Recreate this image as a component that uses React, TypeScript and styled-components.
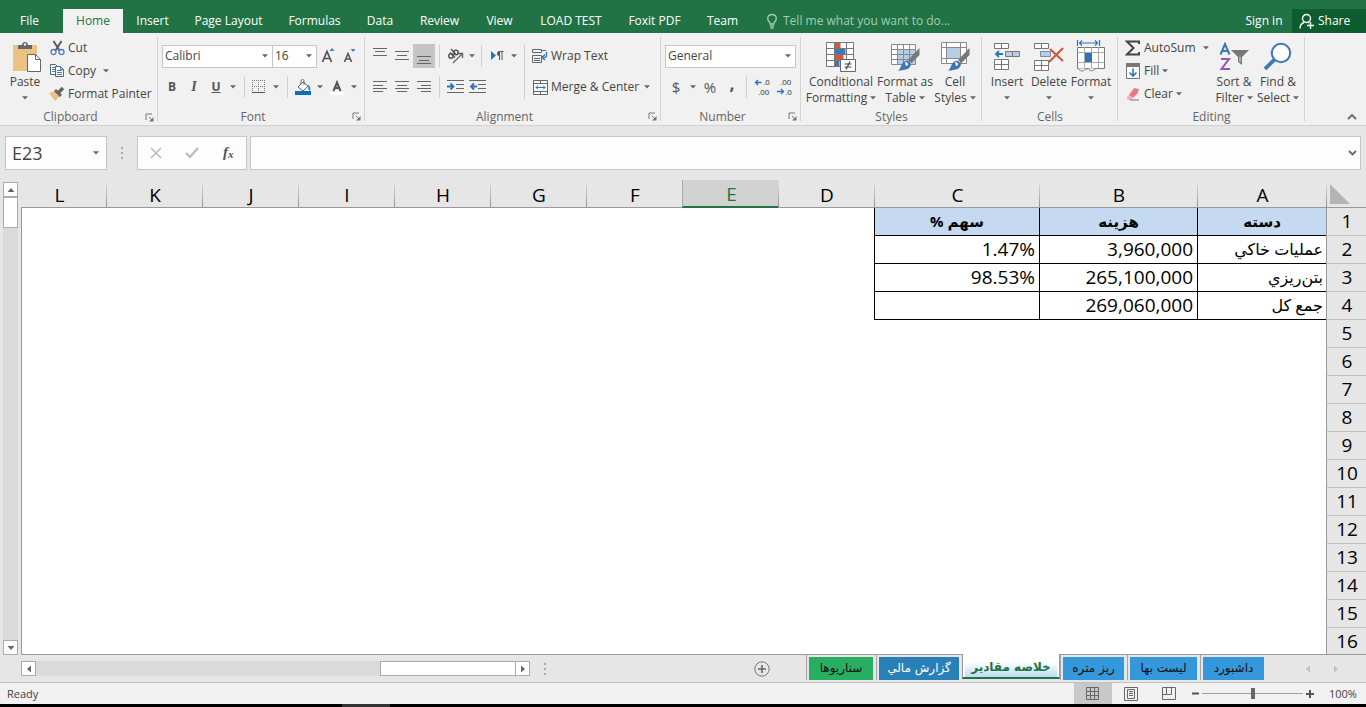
import React from "react";
import styled, { createGlobalStyle, css } from "styled-components";

const GlobalStyle = createGlobalStyle`
  *, *::before, *::after { box-sizing: border-box; }
  html, body { margin: 0; padding: 0; }
  body { background: #e6e6e6; }
  button, input, select { font: inherit; color: inherit; margin: 0; padding: 0; border: 0; background: none; border-radius: 0; outline: 0; }
  svg { display: block; flex: none; }
`;

const App_ = styled.div`
  display: flex;
  flex-direction: column;
  height: 100vh;
  min-height: 360px;
  overflow: hidden;
  font-family: "Open Sans", "DejaVu Sans", sans-serif;
  font-size: 12px;
  line-height: 16px;
  color: #444;
  background: #e6e6e6;
`;

/* ---------- Tab strip ---------- */
const TitleBar = styled.header`
  display: flex;
  align-items: flex-end;
  flex: none;
  height: 33px;
  background: #217346;
  color: #fff;
  white-space: nowrap;
`;
const TabNav = styled.nav`
  display: flex;
`;
const RibbonTab = styled.button<{ $w: number; $active?: boolean }>`
  width: ${(p) => p.$w}px;
  height: 24px;
  text-align: center;
  ${(p) => p.$active && css`background: #f1f1f1; color: #217346;`}
`;
const FileTab = styled(RibbonTab)`
  margin-right: 4px;
`;
const TellMe = styled.label`
  display: flex;
  flex: 1;
  align-items: center;
  height: 24px;
  gap: 5px;
  padding-left: 14px;
  color: #a0cdb0;
`;
const TellMeInput = styled.input`
  width: 200px;
  &::placeholder { color: #a0cdb0; opacity: 1; }
`;
const SignIn = styled.button`
  height: 24px;
  width: 56px;
`;
const Share = styled.button`
  display: flex;
  align-items: center;
  gap: 4px;
  width: 74px;
  height: 24px;
  padding-left: 7px;
  background: #0e5c2f;
`;

/* ---------- Ribbon ---------- */
const Ribbon = styled.div`
  display: flex;
  flex: none;
  height: 93px;
  background: #f1f1f1;
  border-bottom: 1px solid #d2d2d2;
  white-space: nowrap;
`;
const Group = styled.section<{ $w: number }>`
  display: flex;
  flex-direction: column;
  flex: none;
  width: ${(p) => p.$w}px;
  background: linear-gradient(#d4d4d4, #d4d4d4) right 0 top 4px / 1px 84px no-repeat;
`;
const GroupBody = styled.div<{ $left?: number }>`
  display: flex;
  height: 76px;
  padding-left: ${(p) => p.$left ?? 4}px;
`;
const Caption = styled.div<{ $launcher?: boolean }>`
  display: grid;
  grid-template-columns: ${(p) => (p.$launcher ? "1fr 17px" : "1fr")};
  align-items: center;
  height: 17px;
  color: #666;
  text-align: center;
`;
const Launcher = styled.button`
  width: 9px;
  height: 9px;
  margin-left: 4px;
`;
const Rows = styled.div<{ $left?: number }>`
  display: flex;
  flex-direction: column;
  gap: 7px;
  padding: 11px 0 0 ${(p) => p.$left ?? 0}px;
`;
const Row = styled.div`
  display: flex;
  align-items: center;
  height: 24px;
`;
const ToolButton = styled.button<{ $w?: number; $on?: boolean }>`
  display: flex;
  flex: none;
  align-items: center;
  justify-content: center;
  width: ${(p) => p.$w ?? 22}px;
  height: 24px;
  font-size: 15px;
  color: #555;
  background: ${(p) => (p.$on ? "#c5c5c5" : "transparent")};
`;
const BoldButton = styled(ToolButton)`
  font-weight: 700;
  font-size: 12px;
`;
const ItalicButton = styled(BoldButton)`
  font-family: "Liberation Serif", serif;
  font-style: italic;
  font-size: 14px;
`;
const UnderlineButton = styled(BoldButton)`
  text-decoration: underline;
`;
const CommaButton = styled(BoldButton)`
  font-size: 18px;
  padding-bottom: 8px;
`;
const Divider = styled.span<{ $tall?: boolean }>`
  flex: none;
  width: 9px;
  height: ${(p) => (p.$tall ? 55 : 22)}px;
  margin-top: ${(p) => (p.$tall ? 11 : 0)}px;
  background: linear-gradient(#d0d0d0, #d0d0d0) center / 1px 100% no-repeat;
`;
const Stack = styled.div<{ $w?: number; $left?: number }>`
  display: flex;
  flex-direction: column;
  padding: 3px 0 0 ${(p) => p.$left ?? 0}px;
  width: ${(p) => (p.$w ? p.$w + "px" : "auto")};
`;
const LabelButton = styled.button<{ $h?: number }>`
  display: flex;
  align-items: center;
  gap: 3px;
  height: ${(p) => p.$h ?? 23}px;
  text-align: left;
`;
const IconSlot = styled.span`
  display: flex;
  justify-content: center;
  width: 16px;
`;
const CaretGap = styled.span<{ $w: number }>`
  display: flex;
  justify-content: flex-end;
  width: ${(p) => p.$w}px;
`;
const Big = styled.button<{ $w: number }>`
  display: flex;
  flex-direction: column;
  align-items: center;
  flex: none;
  width: ${(p) => p.$w}px;
  height: 76px;
  padding-top: 6px;
`;
const BigIcon = styled.span`
  display: flex;
  align-items: center;
  justify-content: center;
  height: 35px;
`;
const BigLine = styled.span`
  display: flex;
  align-items: center;
  justify-content: center;
  gap: 3px;
  height: 16px;
`;
const Field = styled.label<{ $w: number; $joined?: boolean }>`
  display: grid;
  grid-template-columns: 1fr 10px;
  align-items: center;
  width: ${(p) => p.$w}px;
  height: 23px;
  background: #fff;
  border: 1px solid #c6c6c6;
  ${(p) => p.$joined && css`border-right: 0;`}
`;
const Select = styled.select`
  grid-area: 1 / 1 / 2 / 3;
  width: 100%;
  height: 21px;
  padding-left: 2px;
  appearance: none;
`;
const FieldCaret = styled.span`
  grid-area: 1 / 2;
  pointer-events: none;
`;
const RibbonEnd = styled.div`
  display: flex;
  flex: 1;
  align-items: flex-end;
  justify-content: flex-end;
  padding: 0 9px 3px 0;
`;

/* ---------- Formula bar ---------- */
const FormulaBar = styled.div`
  display: flex;
  flex: none;
  height: 54px;
  padding: 10px 5px;
`;
const box = css`
  display: flex;
  align-items: center;
  background: #fdfdfd;
  border: 1px solid #c6c6c6;
`;
const NameBox = styled.label`
  ${box}
  width: 102px;
  padding: 0 6px;
`;
const NameInput = styled.input`
  flex: 1;
  min-width: 0;
  font-size: 18px;
`;
const Grip = styled.span`
  display: flex;
  align-items: center;
  justify-content: center;
  width: 30px;
`;
const FormulaTools = styled.div`
  ${box}
  width: 110px;
  margin-right: 3px;
`;
const FormulaButton = styled.button`
  display: flex;
  flex: 1;
  align-items: center;
  justify-content: center;
`;
const FormulaField = styled.label`
  ${box}
  flex: 1;
  padding-right: 3px;
`;
const FormulaInput = styled.input`
  flex: 1;
  height: 30px;
  padding-left: 6px;
  font-size: 18px;
`;

/* ---------- Sheet ---------- */
const SheetArea = styled.main`
  display: flex;
  flex: 1;
  min-height: 0;
`;
const VScroll = styled.div`
  display: flex;
  flex-direction: column;
  flex: none;
  width: 15px;
  margin: 2px 3px 0;
  background: #dadada;
`;
const scrollPart = css`
  display: flex;
  align-items: center;
  justify-content: center;
  flex: none;
  width: 15px;
  height: 15px;
  background: #fff;
  border: 1px solid #ababab;
`;
const ScrollButton = styled.button`
  ${scrollPart}
`;
const VThumb = styled.div`
  height: 31px;
  background: #fff;
  border: 1px solid #ababab;
`;
const Spacer = styled.div`
  flex: 1;
`;
const GridWrap = styled.div`
  flex: 1;
  min-width: 0;
  overflow: hidden;
  border-bottom: 1px solid #999;
`;
const Grid = styled.table`
  width: 100%;
  table-layout: fixed;
  border-collapse: separate;
  border-spacing: 0;
  font-size: 19px;
  color: #000;
`;
const Col = styled.col<{ $w?: number }>`
  width: ${(p) => (p.$w ? p.$w + "px" : "auto")};
`;
const ColHead = styled.th<{ $on?: boolean; $last?: boolean }>`
  height: 28px;
  padding: ${(p) => (p.$last ? "2px 8px 0 0" : "2px 0 0 2px")};
  font-weight: 400;
  line-height: 24px;
  text-align: center;
  border-bottom: 1px solid #999;
  background: ${(p) =>
    p.$last ? "none" : "linear-gradient(#e6e6e6, #8f8f8f) left top / 1px 100% no-repeat"};
  ${(p) =>
    p.$on &&
    css`
      color: #217346;
      background: #d2d2d2;
      border-left: 1px solid #a8a8a8;
      border-bottom: 2px solid #217346;
    `}
`;
const Corner = styled.th`
  padding: 0;
  border-bottom: 1px solid #999;
  background: linear-gradient(#e6e6e6, #8f8f8f) left top / 1px 100% no-repeat;
`;
const CornerButton = styled.button`
  display: flex;
  width: 100%;
  padding: 0 16px 0 4px;
`;
const RowHead = styled.th`
  height: 28px;
  padding: 0 0 1px 1px;
  font-weight: 400;
  line-height: 24px;
  text-align: center;
  background: #e6e6e6;
  border-left: 1px solid #999;
  border-bottom: 1px solid #c0c0c0;
`;
const Cell = styled.td<{ $filled?: boolean; $edge?: boolean }>`
  height: 28px;
  padding: 0 3px 1px;
  line-height: 24px;
  background: #fff;
  text-align: right;
  white-space: nowrap;
  ${(p) => p.$edge && css`border-left: 1px solid #999;`}
  ${(p) =>
    p.$filled &&
    css`
      border-left: 1px solid #000;
      border-bottom: 1px solid #000;
    `}
`;
const LabelCell = styled(Cell)`
  font-size: 16px;
`;
const TitleCell = styled(Cell)`
  background: #c5d9f1;
  font-weight: 700;
  font-size: 15px;
  text-align: center;
`;

/* ---------- Sheet tabs ---------- */
const BottomBar = styled.div`
  display: flex;
  flex: none;
  height: 28px;
  padding-left: 21px;
  border-bottom: 1px solid #c0c0c0;
`;
const HScroll = styled.div`
  display: flex;
  width: 509px;
  height: 15px;
  margin-top: 6px;
  background: #dadada;
`;
const HThumb = styled.div`
  width: 136px;
  margin-right: -1px;
  background: #fff;
  border: 1px solid #ababab;
`;
const AddSheet = styled.button`
  display: flex;
  align-items: center;
  justify-content: center;
  width: 26px;
  margin: 0 31px 0 auto;
`;
const SheetTabs = styled.div`
  display: flex;
  margin-right: 34px;
  font-family: "DejaVu Sans", sans-serif;
`;
const SheetTab = styled.button<{ $w: number; $bg: string; $fg: string }>`
  width: ${(p) => p.$w}px;
  height: 25px;
  padding: 2px 3px 0 2px;
  border-left: 1px solid #a6a6a6;
  background: ${(p) => p.$bg} content-box;
  color: ${(p) => p.$fg};
  line-height: 23px;
`;
const ActiveTab = styled.button<{ $w: number }>`
  width: ${(p) => p.$w}px;
  height: 25px;
  margin-top: -1px;
  position: relative;
  font-weight: 700;
  color: #217346;
  background: linear-gradient(#fff 20%, #bddcf2) content-box, #fff;
  padding: 4px 2px 0;
  line-height: 19px;
  border: solid #999;
  border-width: 0 1px;
  border-bottom: 2px solid #217346;
`;
const TabArrows = styled.div`
  display: flex;
  align-items: center;
  gap: 20px;
  padding: 0 26px 0 3px;
`;

/* ---------- Status bar ---------- */
const StatusBar = styled.footer`
  display: flex;
  align-items: center;
  flex: none;
  height: 21px;
  padding-left: 7px;
  background: #f1f1f1;
  font-size: 11px;
`;
const ViewButton = styled.button<{ $on?: boolean }>`
  display: flex;
  align-items: center;
  justify-content: center;
  width: 38px;
  height: 21px;
  background: ${(p) => (p.$on ? "#c8c8c8" : "transparent")};
`;
const ZoomButton = styled.button`
  display: flex;
  align-items: center;
  justify-content: center;
  width: 14px;
  height: 20px;
`;
const Zoom = styled.input`
  width: 101px;
  height: 20px;
  appearance: none;
  &::-webkit-slider-runnable-track {
    height: 11px;
    background: linear-gradient(#a0a0a0, #a0a0a0) center / 100% 1px no-repeat;
  }
  &::-webkit-slider-thumb {
    appearance: none;
    width: 4px;
    height: 11px;
    background: #666;
  }
`;
const ZoomValue = styled.span`
  width: 49px;
  padding-left: 12px;
`;
const DesktopEdge = styled.div`
  flex: none;
  height: 3px;
  background: linear-gradient(#333, #333) 342px 0 / 48px 3px no-repeat #000;
`;

/* ---------- Icons ---------- */
const Caret = ({ s = 6, c = "#666" }: { s?: number; c?: string }) => (
  <svg width={s} height="4" viewBox="0 0 6 4"><path d="M0 0.300h6L3 3.600z" fill={c} /></svg>
);
const Svg = ({ w, h, children }: { w: number; h: number; children: React.ReactNode }) => (
  <svg width={w} height={h} viewBox={`0 0 ${w} ${h}`} fill="none">{children}</svg>
);
const LauncherIcon = () => (
  <Svg w={9} h={9}><path d="M1 7V1h6M4 4l3 3" stroke="#777" /><path d="M8.500 4v4.500H4z" fill="#777" /></Svg>
);
const PasteIcon = () => (
  <Svg w={34} h={32}>
    <g transform="translate(4 0)">
      <path d="M1 4h24v26H1z" fill="#eac282" />
      <path d="M6 8V4h4c0-4 6-4 6 0h4v4z" fill="#666" /><circle cx="13" cy="3.500" r="1.200" fill="#f1f1f1" />
      <path d="M15.500 13.500h8l5 5v12h-13z" fill="#fff" stroke="#666" /><path d="M23.500 13.500v5h5" stroke="#666" />
    </g>
  </Svg>
);
const CutIcon = () => (
  <Svg w={15} h={16}>
    <path d="M3.500 1l6 9.500M11.500 1l-6 9.500" stroke="#5a5a5a" strokeWidth="2" />
    <circle cx="3.500" cy="12" r="2.500" stroke="#4a7ebb" strokeWidth="1.300" /><circle cx="11.500" cy="12" r="2.500" stroke="#4a7ebb" strokeWidth="1.300" />
  </Svg>
);
const CopyIcon = () => (
  <Svg w={16} h={15}>
    <path d="M1.500 1.500h5l2 2v8h-7z" fill="#fff" stroke="#55677c" />
    <path d="M3 4.500h3M3 6.500h3M3 8.500h3" stroke="#4a7ebb" />
    <path d="M6.500 3.500h5l3 3v7h-8z" fill="#fff" stroke="#55677c" /><path d="M11.500 3.500v3h3M8 7.500h5M8 9.500h5M8 11.500h5" stroke="#4a7ebb" />
  </Svg>
);
const BrushIcon = () => (
  <Svg w={16} h={16}>
    <path d="M0 7l6-2 5 5-5 5z" fill="#eac282" /><path d="M6 4l6 6" stroke="#666" strokeWidth="3" />
    <path d="M9 7l5-5" stroke="#666" strokeWidth="3.500" />
  </Svg>
);
const GrowIcon = ({ small }: { small?: boolean }) => (
  <Svg w={14} h={18}>
    {small ? (
      <><path d="M1.500 15L5 6.500 8.500 15M3 12h4" stroke="#555" strokeWidth="1.600" /><path d="M7.500 2h5L10 5z" fill="#4a7ebb" /></>
    ) : (
      <><path d="M1.500 15L6 4.500 10.500 15M3 11.500h6" stroke="#555" strokeWidth="1.700" /><path d="M8.500 4h5L11 1z" fill="#4a7ebb" /></>
    )}
  </Svg>
);
const BordersIcon = () => (
  <Svg w={14} h={14}>
    <path d="M0 .5h14M0 6.500h14M.5 0v14M6.500 0v14M12.500 0v14" stroke="#777" strokeDasharray="1 1" /><path d="M0 12.500h13" stroke="#555" />
  </Svg>
);
const FillColorIcon = () => (
  <Svg w={17} h={17}>
    <path d="M3 8l5-5 5 4-5 5z" fill="#fff" stroke="#666" /><path d="M6 5V2c0-2 3-2 3 0v4" stroke="#666" />
    <path d="M13 6c2 1 3 3 2 6-2-1-2-3-2-6z" fill="#4a7ebb" /><path d="M0 12h16v4H0z" fill="#0070c0" />
  </Svg>
);
const FontColorIcon = () => (
  <Svg w={14} h={17}>
    <path d="M3.500 12L7 3.500 10.500 12M4.500 9h5" stroke="#555" strokeWidth="2" /><path d="M0 13h14v3H0z" fill="#fff" />
  </Svg>
);
const Lines = ({ rows }: { rows: [number, number, number][] }) => (
  <Svg w={15} h={18}>
    {rows.map(([y, a, b]) => <path key={y} d={`M${a} ${y}.5H${b}`} stroke="#666" />)}
  </Svg>
);
const IndentIcon = ({ out }: { out?: boolean }) => (
  <Svg w={17} h={14}>
    <path d="M0 .5h17M9 4.500h8M9 8.500h8M0 12.500h17" stroke="#666" />
    <path d={out ? "M8 6.500H2M5 3.500l-3 3 3 3" : "M0 6.500h6M3.500 3.500l3 3-3 3"} stroke="#2f75b5" strokeWidth="1.800" />
  </Svg>
);
const OrientIcon = () => (
  <Svg w={17} h={16}>
    <circle cx="4" cy="8" r="2.200" stroke="#555" strokeWidth="1.500" /><path d="M3 4.500l5 5" stroke="#555" strokeWidth="1.500" />
    <circle cx="9" cy="4.500" r="2.200" stroke="#555" strokeWidth="1.500" /><path d="M4 1l4.500 5" stroke="#555" strokeWidth="1.500" />
    <path d="M6 15l9-9M11 5.500h4.500V10" stroke="#666" strokeWidth="1.400" />
  </Svg>
);
const DirectionIcon = () => (
  <Svg w={14} h={12}>
    <path d="M1 1l5 4.500L1 10z" fill="#2f75b5" /><path d="M13.500 1.500h-4M9.500 1v9M12 1v9" stroke="#555" /><path d="M9.500 1a2.500 2.500 0 100 5z" fill="#555" />
  </Svg>
);
const WrapIcon = () => (
  <Svg w={16} h={16}>
    <path d="M.5 1.500h9v3h-9zM9.500 2.500H14M.5 7.500h9v7h-9zM2 10.500h6M2 12.500h6" stroke="#666" />
    <path d="M14.500 4v4c0 1-1 1.500-3 1.500M13 6.500l-3 3 3 2.500" stroke="#2f75b5" strokeWidth="1.300" />
  </Svg>
);
const MergeIcon = () => (
  <Svg w={15} h={15}>
    <path d="M.5.5h14v14H.5zM.5 3.500h14M.5 11.500h14M7.500.5v3M7.500 11.500v3" stroke="#666" fill="#fff" />
    <path d="M3 7.500h9M5 5.500l-2 2 2 2M10 5.500l2 2-2 2" stroke="#2f75b5" />
  </Svg>
);
const DecimalIcon = ({ less }: { less?: boolean }) => (
  <svg width="16" height="18" viewBox="0 0 16 18" fontSize="8" fill="#333" fontFamily="Liberation Sans">
    <text x={less ? 4 : 9} y="7">{less ? ".00" : ".0"}</text>
    <text x={less ? 9 : 4} y="17">{less ? ".0" : ".00"}</text>
    {less
      ? <path d="M1 13.500h6M5 11l2.500 2.500L5 16" fill="none" stroke="#2f75b5" strokeWidth="1.400" />
      : <path d="M7.500 4.500h-6M4 2L1.500 4.500 4 7" fill="none" stroke="#2f75b5" strokeWidth="1.400" />}
  </svg>
);
const ConditionalIcon = () => (
  <Svg w={32} h={32}>
    <path d="M1.500 1.500h27v24h-27z" fill="#fff" />
    <path d="M9.500 1h6v6h-6zM9.500 13h9v6h-9z" fill="#d0583f" /><path d="M9.500 7h11v6h-11zM9.500 19h5v6h-5z" fill="#3f76b5" />
    <path d="M1.500 1.500h27v24h-27zM1.500 7.500h27M1.500 13.500h27M1.500 19.500h27M9.500 1v24M21.500 1v24" stroke="#777" />
    <path d="M15.500 18.500h15v12h-15z" fill="#fff" stroke="#666" />
    <path d="M19.500 23h7M19.500 26h7M25 20.500l-4 8" stroke="#444" strokeWidth="1.200" />
  </Svg>
);
const Paintbrush = () => (
  <g><path d="M29.500 7v7l-8 8-3.500-3z" fill="#777" /><path d="M17.500 19.500l3.500 3c0 5-5 7-13 7 4-2 2-9 9.500-10z" fill="#3f76b5" /><path d="M15 21c2 0 3 1 3 3l-2 1z" fill="#fff" /></g>
);
const TableFormatIcon = () => (
  <Svg w={30} h={32}>
    <path d="M1.500 3.500h24v20h-24z" fill="#fff" /><path d="M8 9h17v14H8z" fill="#b8cce4" />
    <path d="M1.500 3.500h24v20h-24zM1.500 8.500h24M1.500 13.500h24M1.500 18.500h24M7.500 3v20M13.500 3v20M19.500 3v20" stroke="#888" /><Paintbrush />
  </Svg>
);
const CellStylesIcon = () => (
  <Svg w={30} h={32}>
    <path d="M1.500 1.500h25v21h-25z" fill="#fff" /><path d="M7 7h13v10H7z" fill="#b8cce4" />
    <path d="M1.500 1.500h25v21h-25zM1.500 6.500h25M1.500 17.500h25M6.500 1v21M20.500 1v21" stroke="#888" /><Paintbrush />
  </Svg>
);
const InsertIcon = () => (
  <Svg w={28} h={30}>
    <path d="M1.500 1.500h14v5h-14zM8.500 1.500v5M1.500 17.500h14v10h-14zM8.500 17.500v10M1.500 22.500h14" fill="#fff" stroke="#777" />
    <path d="M12.500 9.500h14v5h-14z" fill="#b8cce4" stroke="#777" /><path d="M19.500 9.500v5" stroke="#777" />
    <path d="M10 12H3M6 9l-3 3 3 3" stroke="#2f75b5" strokeWidth="1.800" />
  </Svg>
);
const DeleteIcon = () => (
  <Svg w={30} h={30}>
    <path d="M.5 1.500h14v5H.5zM7.500 1.500v5M.5 18.500h14v10H.5zM7.500 18.500v10M.5 23.500h14" fill="#fff" stroke="#777" />
    <path d="M6.500 9.500h10v5h-10z" fill="#b8cce4" stroke="#6f8fb8" /><path d="M16 7l13 12M29 6L15 20" stroke="#d0583f" strokeWidth="2.200" />
  </Svg>
);
const FormatIcon = () => (
  <Svg w={30} h={33}>
    <path d="M1.500 0v6M23.500 0v6M3 3h19M6 .5L3.500 3 6 5.500M19 .5L21.500 3 19 5.500" stroke="#2f75b5" strokeWidth="1.200" />
    <path d="M1.500 7.500h27v21h-27z" fill="#fff" stroke="#777" /><path d="M1.500 12.500h27M1.500 22.500h27M8.500 7v22M15.500 7v22M22.500 7v22" stroke="#aaa" />
    <path d="M9 13h7v9H9z" fill="#2f75b5" /><path d="M2 28.500c2 3 6 3 7 1l3-1c3 4 6 2 7 0" fill="#fff" stroke="#777" />
  </Svg>
);
const SigmaIcon = () => (
  <Svg w={16} h={16}><path d="M14 4V1.500H2L8.500 8 2 14.500h12V12" stroke="#444" strokeWidth="2" /></Svg>
);
const FillIcon = () => (
  <Svg w={14} h={16}>
    <path d="M.5.5h13v15H.5z" fill="#fff" stroke="#777" /><path d="M0 0h14v4H0z" fill="#777" />
    <path d="M7 5.500V13M3.500 9.500L7 13l3.500-3.500" stroke="#2f75b5" strokeWidth="1.600" />
  </Svg>
);
const ClearIcon = () => (
  <Svg w={14} h={14}>
    <path d="M8 1l5 1-1 4-5 5-4-3z" fill="#e8798f" /><path d="M3 8l4 3-2 2H2L.5 10.500z" fill="#f3aebb" /><path d="M4 13h9" stroke="#777" />
  </Svg>
);
const SortIcon = () => (
  <Svg w={30} h={30}>
    <path d="M1.500 12.500L6 2l4.500 10.500M3 9h6" stroke="#3f76b5" strokeWidth="2" /><path d="M2 17h8L2.500 27h8.500" stroke="#9455b5" strokeWidth="2" />
    <path d="M12 8h18l-7 7v8l-4-3v-5z" fill="#777" /><path d="M21 14.500v5.500" stroke="#ddd" />
  </Svg>
);
const FindIcon = () => (
  <Svg w={30} h={30}>
    <circle cx="18" cy="11" r="9.200" fill="#fff" stroke="#3f76b5" strokeWidth="2" /><path d="M11 18L2 27" stroke="#3f76b5" strokeWidth="3.800" />
  </Svg>
);
const BulbIcon = () => (
  <Svg w={12} h={16}>
    <path d="M4 11V9.500C.5 7 1 1.500 6 1.500S11.500 7 8 9.500V11zM4 13h4M4.500 15h3" stroke="#a0cdb0" strokeWidth="1.300" />
  </Svg>
);
const PersonIcon = () => (
  <Svg w={15} h={16}>
    <circle cx="7.500" cy="5.500" r="4" stroke="#fff" strokeWidth="1.400" /><path d="M1 15.500c0-3 1.500-5 4-6M9 9l1 1M8 12.500h7M11.500 9v7" stroke="#fff" strokeWidth="1.400" />
  </Svg>
);
const Dots = () => (
  <Svg w={3} h={12}><path d="M0 1h2M0 6h2M0 11h2" stroke="#aaa" strokeWidth="2" /></Svg>
);
const Tri = ({ d, c = "#666" }: { d: string; c?: string }) => (
  <Svg w={8} h={8}><path d={d} fill={c} /></Svg>
);
const LEFT = "M6 .5v7L2 4z";
const RIGHT = "M2 .5v7L6 4z";
const UP = "M.5 6h7L4 2z";
const DOWN = "M.5 2h7L4 6z";

/* ---------- Pieces ---------- */
const Tool = ({ label, w, on, children }: { label: string; w?: number; on?: boolean; children: React.ReactNode }) => (
  <ToolButton aria-label={label} $w={w} $on={on}>{children}</ToolButton>
);
const Drop = ({ label, w }: { label: string; w: number }) => (
  <ToolButton aria-label={label} $w={w}><Caret /></ToolButton>
);
const GroupCaption = ({ text, launcher }: { text: string; launcher?: boolean }) => (
  <Caption $launcher={launcher}>
    <span>{text}</span>
    {launcher && <Launcher aria-label={`${text} settings`}><LauncherIcon /></Launcher>}
  </Caption>
);
const BigButton = ({ w, icon, top, bottom }: { w: number; icon: React.ReactNode; top: string; bottom?: string }) => (
  <Big $w={w}>
    <BigIcon>{icon}</BigIcon>
    <BigLine>{top}</BigLine>
    <BigLine>{bottom}<Caret /></BigLine>
  </Big>
);
const Combo = ({ label, value, w, joined }: { label: string; value: string; w: number; joined?: boolean }) => (
  <Field $w={w} $joined={joined}>
    <Select aria-label={label} defaultValue={value}><option>{value}</option></Select>
    <FieldCaret><Caret /></FieldCaret>
  </Field>
);

const tabs: [string, number][] = [
  ["Home", 60], ["Insert", 59], ["Page Layout", 93], ["Formulas", 79], ["Data", 52],
  ["Review", 67], ["View", 53], ["LOAD TEST", 90], ["Foxit PDF", 77], ["Team", 59],
];
const columns: [string, number | undefined][] = [
  ["A", 129], ["B", 158], ["C", 165], ["D", 96], ["E", 96], ["F", 96],
  ["G", 96], ["H", 96], ["I", 96], ["J", 96], ["K", 96], ["L", undefined],
];
const data = [
  ["دسته", "هزینه", "سهم %"],
  ["عمليات خاكي", "3,960,000", "1.47%"],
  ["بتن‌ريزي", "265,100,000", "98.53%"],
  ["جمع كل", "269,060,000", ""],
];
const ROWS = 16;

export default function App() {
  return (
    <App_>
      <GlobalStyle />
      <TitleBar>
        <TabNav>
          <FileTab $w={59}>File</FileTab>
          {tabs.map(([t, w]) => <RibbonTab key={t} $w={w} $active={t === "Home"}>{t}</RibbonTab>)}
        </TabNav>
        <TellMe>
          <BulbIcon />
          <TellMeInput aria-label="Tell me" placeholder="Tell me what you want to do..." />
        </TellMe>
        <SignIn>Sign in</SignIn>
        <Share><PersonIcon />Share</Share>
      </TitleBar>

      <Ribbon>
        <Group $w={158}>
          <GroupBody $left={5}>
            <Big $w={40}>
              <BigIcon><PasteIcon /></BigIcon>
              <BigLine>Paste</BigLine>
              <BigLine><Caret /></BigLine>
            </Big>
            <Stack $w={110} $left={4}>
              <LabelButton><IconSlot><CutIcon /></IconSlot>Cut</LabelButton>
              <LabelButton><IconSlot><CopyIcon /></IconSlot>Copy<CaretGap $w={10}><Caret /></CaretGap></LabelButton>
              <LabelButton><IconSlot><BrushIcon /></IconSlot>Format Painter</LabelButton>
            </Stack>
          </GroupBody>
          <GroupCaption text="Clipboard" launcher />
        </Group>

        <Group $w={207}>
          <GroupBody>
            <Rows>
              <Row>
                <Combo label="Font" value="Calibri" w={110} joined />
                <Combo label="Font size" value="16" w={45} />
                <Tool label="Increase font size"><GrowIcon /></Tool>
                <Tool label="Decrease font size"><GrowIcon small /></Tool>
              </Row>
              <Row>
                <BoldButton $w={20}>B</BoldButton>
                <ItalicButton $w={24}>I</ItalicButton>
                <UnderlineButton $w={20}>U</UnderlineButton>
                <Drop label="Underline style" w={14} />
                <Divider />
                <Tool label="Borders" w={20}><BordersIcon /></Tool>
                <Drop label="Border style" w={14} />
                <Divider />
                <Tool label="Fill color"><FillColorIcon /></Tool>
                <Drop label="Pick fill color" w={12} />
                <Tool label="Font color"><FontColorIcon /></Tool>
                <Drop label="Pick font color" w={12} />
              </Row>
            </Rows>
          </GroupBody>
          <GroupCaption text="Font" launcher />
        </Group>

        <Group $w={296}>
          <GroupBody>
            <Rows>
              <Row>
                <Tool label="Top align"><Lines rows={[[1, 0, 14], [4, 2, 12], [8, 0, 14]]} /></Tool>
                <Tool label="Middle align"><Lines rows={[[4, 0, 14], [8, 2, 12], [12, 0, 14]]} /></Tool>
                <Tool label="Bottom align" on><Lines rows={[[9, 0, 14], [13, 2, 12], [16, 0, 14]]} /></Tool>
                <Divider />
                <Tool label="Orientation"><OrientIcon /></Tool>
                <Drop label="Orientation options" w={11} />
                <Divider />
                <Tool label="Text direction"><DirectionIcon /></Tool>
                <Drop label="Direction options" w={12} />
              </Row>
              <Row>
                <Tool label="Align left"><Lines rows={[[3, 0, 14], [7, 0, 10], [10, 0, 14], [13, 0, 10]]} /></Tool>
                <Tool label="Center"><Lines rows={[[3, 0, 14], [7, 2, 12], [10, 0, 14], [13, 2, 12]]} /></Tool>
                <Tool label="Align right"><Lines rows={[[3, 0, 14], [7, 4, 14], [10, 0, 14], [13, 4, 14]]} /></Tool>
                <Divider />
                <Tool label="Increase indent"><IndentIcon /></Tool>
                <Tool label="Decrease indent"><IndentIcon out /></Tool>
              </Row>
            </Rows>
            <Divider $tall />
            <Rows $left={3}>
              <LabelButton $h={24}><IconSlot><WrapIcon /></IconSlot>Wrap Text</LabelButton>
              <LabelButton $h={24}><IconSlot><MergeIcon /></IconSlot>Merge &amp; Center<CaretGap $w={8}><Caret /></CaretGap></LabelButton>
            </Rows>
          </GroupBody>
          <GroupCaption text="Alignment" launcher />
        </Group>

        <Group $w={140}>
          <GroupBody>
            <Rows>
              <Row><Combo label="Number format" value="General" w={131} /></Row>
              <Row>
                <Tool label="Currency">$</Tool>
                <Drop label="Currency options" w={11} />
                <Tool label="Percent" w={24}>%</Tool>
                <CommaButton aria-label="Comma" $w={20}>,</CommaButton>
                <Divider />
                <Tool label="Increase decimal"><DecimalIcon /></Tool>
                <Tool label="Decrease decimal"><DecimalIcon less /></Tool>
              </Row>
            </Rows>
          </GroupBody>
          <GroupCaption text="Number" launcher />
        </Group>

        <Group $w={181}>
          <GroupBody>
            <BigButton w={72} icon={<ConditionalIcon />} top="Conditional" bottom="Formatting" />
            <BigButton w={56} icon={<TableFormatIcon />} top="Format as" bottom="Table" />
            <BigButton w={44} icon={<CellStylesIcon />} top="Cell" bottom="Styles" />
          </GroupBody>
          <GroupCaption text="Styles" />
        </Group>

        <Group $w={136}>
          <GroupBody>
            <BigButton w={42} icon={<InsertIcon />} top="Insert" />
            <BigButton w={42} icon={<DeleteIcon />} top="Delete" />
            <BigButton w={42} icon={<FormatIcon />} top="Format" />
          </GroupBody>
          <GroupCaption text="Cells" />
        </Group>

        <Group $w={187}>
          <GroupBody $left={7}>
            <Stack $w={87}>
              <LabelButton><IconSlot><SigmaIcon /></IconSlot>AutoSum<CaretGap $w={10}><Caret /></CaretGap></LabelButton>
              <LabelButton><IconSlot><FillIcon /></IconSlot>Fill<Caret /></LabelButton>
              <LabelButton><IconSlot><ClearIcon /></IconSlot>Clear<Caret /></LabelButton>
            </Stack>
            <BigButton w={44} icon={<SortIcon />} top="Sort &amp;" bottom="Filter" />
            <BigButton w={44} icon={<FindIcon />} top="Find &amp;" bottom="Select" />
          </GroupBody>
          <GroupCaption text="Editing" />
        </Group>
        <RibbonEnd>
          <button aria-label="Collapse ribbon">
            <Svg w={10} h={10}><path d="M1 7l4-4 4 4" stroke="#666" strokeWidth="1.800" /></Svg>
          </button>
        </RibbonEnd>
      </Ribbon>

      <FormulaBar>
        <NameBox><NameInput aria-label="Name box" defaultValue="E23" /><Caret s={8} /></NameBox>
        <Grip><Dots /></Grip>
        <FormulaTools>
          <FormulaButton aria-label="Cancel"><Svg w={12} h={12}><path d="M1 1l10 10M11 1L1 11" stroke="#bbb" strokeWidth="1.600" /></Svg></FormulaButton>
          <FormulaButton aria-label="Enter"><Svg w={14} h={12}><path d="M1 6l4 4 8-9" stroke="#bbb" strokeWidth="2.200" /></Svg></FormulaButton>
          <FormulaButton aria-label="Insert function">
            <svg width="14" height="16" viewBox="0 0 14 16" fontFamily="Liberation Serif" fontStyle="italic" fontWeight="700" fill="#555">
              <text x="2" y="12" fontSize="15">f</text><text x="7" y="13" fontSize="11">x</text>
            </svg>
          </FormulaButton>
        </FormulaTools>
        <FormulaField>
          <FormulaInput aria-label="Formula" />
          <Svg w={9} h={8}><path d="M1 2l3.500 3.500L8 2" stroke="#666" strokeWidth="1.800" /></Svg>
        </FormulaField>
      </FormulaBar>

      <SheetArea>
        <VScroll>
          <ScrollButton aria-label="Scroll up"><Tri d={UP} /></ScrollButton>
          <VThumb />
          <Spacer />
          <ScrollButton aria-label="Scroll down"><Tri d={DOWN} /></ScrollButton>
        </VScroll>
        <GridWrap>
          <Grid dir="rtl">
            <colgroup>
              <Col $w={40} />
              {columns.map(([c, w]) => <Col key={c} $w={w} />)}
            </colgroup>
            <thead>
              <tr>
                <Corner>
                  <CornerButton aria-label="Select all" dir="ltr"><Svg w={20} h={20}><path d="M0 0v20h20z" fill="#b4b4b4" /></Svg></CornerButton>
                </Corner>
                {columns.map(([c]) => <ColHead key={c} scope="col" $on={c === "E"} $last={c === "L"}>{c}</ColHead>)}
              </tr>
            </thead>
            <tbody>
              {Array.from({ length: ROWS }, (_, r) => (
                <tr key={r}>
                  <RowHead scope="row">{r + 1}</RowHead>
                  {columns.map(([c], i) => {
                    const text = data[r]?.[i];
                    if (text !== undefined && r === 0) return <TitleCell key={c} $filled>{text}</TitleCell>;
                    if (text !== undefined && i === 0) return <LabelCell key={c} $filled>{text}</LabelCell>;
                    return (
                      <Cell key={c} $filled={text !== undefined} $edge={c === "L"} dir="ltr">{text}</Cell>
                    );
                  })}
                </tr>
              ))}
            </tbody>
          </Grid>
        </GridWrap>
      </SheetArea>

      <BottomBar>
        <HScroll>
          <ScrollButton aria-label="Scroll left"><Tri d={LEFT} /></ScrollButton>
          <Spacer />
          <HThumb />
          <ScrollButton aria-label="Scroll right"><Tri d={RIGHT} /></ScrollButton>
        </HScroll>
        <Grip><Dots /></Grip>
        <AddSheet aria-label="New sheet">
          <Svg w={16} h={16}><circle cx="8" cy="8" r="7.200" stroke="#777" /><path d="M4 8h8M8 4v8" stroke="#666" strokeWidth="1.600" /></Svg>
        </AddSheet>
        <SheetTabs>
          <SheetTab $w={70} $bg="#27ae60" $fg="#111">سناریوها</SheetTab>
          <SheetTab $w={86} $bg="#2980b9" $fg="#fff">گزارش مالي</SheetTab>
          <ActiveTab $w={98}>خلاصه مقادیر</ActiveTab>
          <SheetTab $w={67} $bg="#3498db" $fg="#111">ریز متره</SheetTab>
          <SheetTab $w={73} $bg="#3498db" $fg="#111">لیست بها</SheetTab>
          <SheetTab $w={67} $bg="#3498db" $fg="#111">داشبورد</SheetTab>
        </SheetTabs>
        <TabArrows>
          <Tri d={LEFT} c="#c0c0c0" />
          <Tri d={RIGHT} c="#c0c0c0" />
        </TabArrows>
      </BottomBar>

      <StatusBar>
        Ready
        <Spacer />
        <ViewButton aria-label="Normal view" $on>
          <Svg w={14} h={13}><path d="M.5.5h12v12H.5zM.5 4.500h12M.5 8.500h12M4.500.5v12M8.500.5v12" stroke="#666" /></Svg>
        </ViewButton>
        <ViewButton aria-label="Page layout view">
          <Svg w={14} h={14}><path d="M.5.5h13v13H.5zM3.500 2.500h7v9h-7zM5 4.500h4M5 6.500h4M5 8.500h4" stroke="#666" /></Svg>
        </ViewButton>
        <ViewButton aria-label="Page break view">
          <Svg w={14} h={13}><path d="M.5.5h13v12H.5zM4.500.5v7h5v-7M.5 7.500h4" stroke="#666" /></Svg>
        </ViewButton>
        <ZoomButton aria-label="Zoom out"><Svg w={7} h={7}><path d="M0 3.500h7" stroke="#555" strokeWidth="2" /></Svg></ZoomButton>
        <Zoom type="range" aria-label="Zoom" min={0} max={200} defaultValue={100} />
        <ZoomButton aria-label="Zoom in"><Svg w={8} h={8}><path d="M0 4h8M4 0v8" stroke="#555" strokeWidth="2" /></Svg></ZoomButton>
        <ZoomValue>100%</ZoomValue>
      </StatusBar>
      <DesktopEdge />
    </App_>
  );
}
